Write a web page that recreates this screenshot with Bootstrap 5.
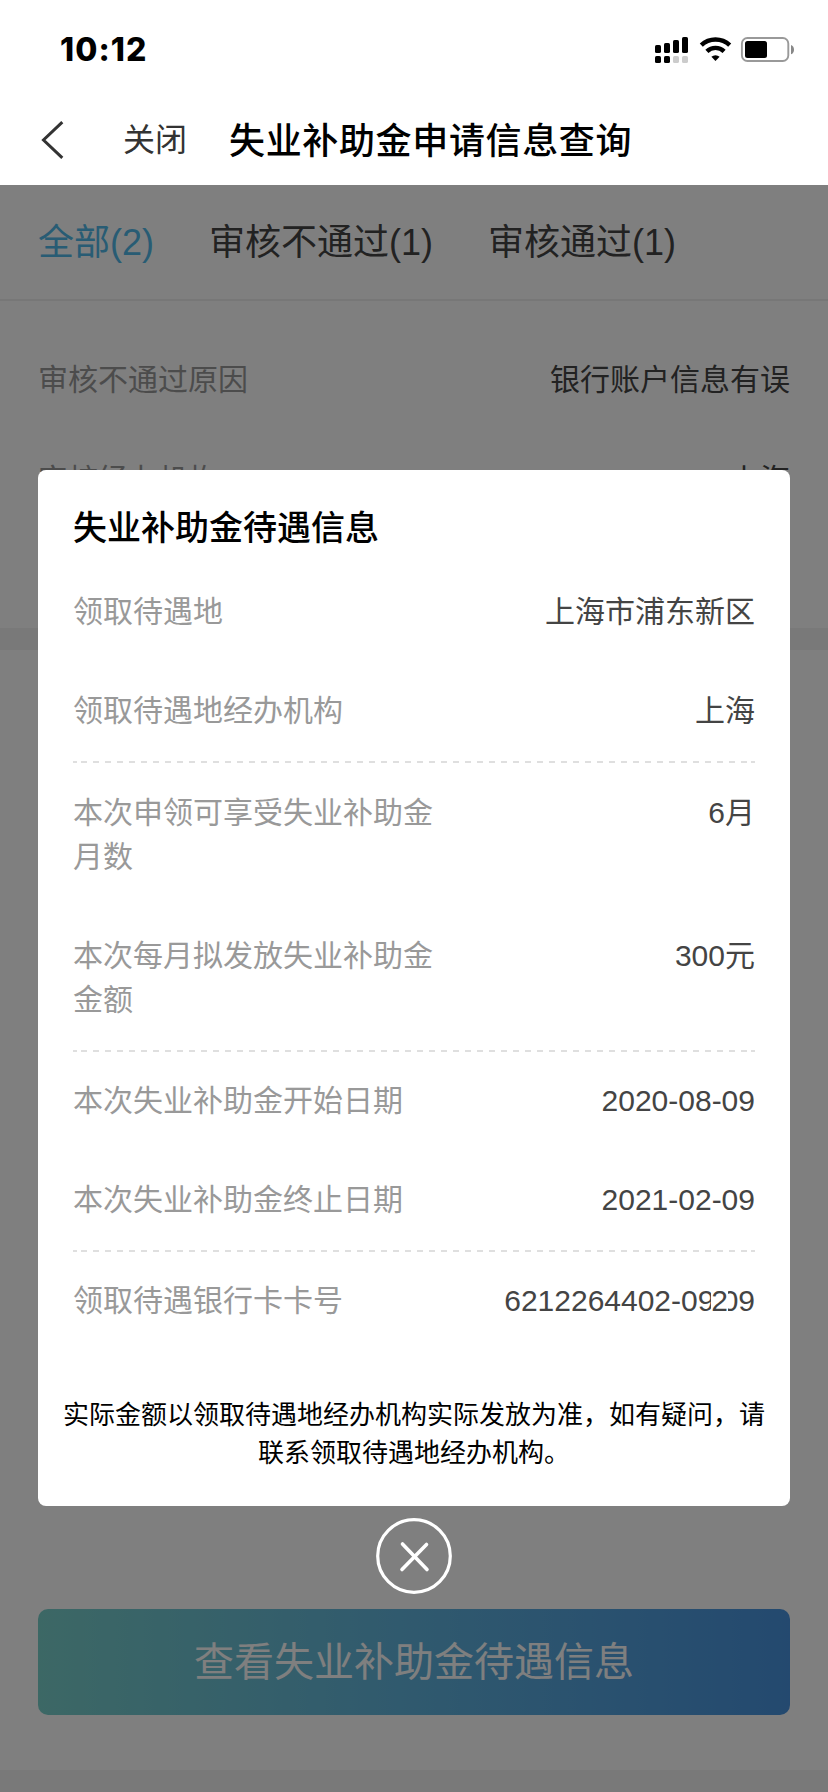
<!DOCTYPE html>
<html lang="zh-CN">
<head>
<meta charset="utf-8">
<meta name="viewport" content="width=device-width, initial-scale=1">
<title>失业补助金申请信息查询</title>
<link href="https://cdn.jsdelivr.net/npm/bootstrap@5.3.0/dist/css/bootstrap.min.css" rel="stylesheet">
<style>
body{font-family:"Liberation Sans","Noto Sans CJK SC",sans-serif;color:#444;background:#fff;overflow:hidden}
.screen{height:1792px}
.topbar{height:185px}
.statusbar{height:98px;padding:2px 34px 0 60px}
.clock{font:800 32px/1 Inter,sans-serif;color:#000;letter-spacing:1.100px}
.navline{height:87px;padding-left:41px}
.back{margin-top:-4px}
.close-link{font-size:32px;line-height:44px;margin:-3px 0 0 59px;color:#333}
.page-title{font-size:36px;font-weight:500;line-height:50px;margin-left:42px;letter-spacing:.65px;color:#000}
.tabs{height:116px;padding:0 38px;gap:55px;font-size:36px;line-height:50px;border-bottom:2px solid #eee}
.tabs .current{color:#50b8e8}
.tabs span{margin-top:2px}
.kv{font-size:30px;line-height:44px;gap:24px}
.kv dt{font-weight:400;color:#999;width:362px}
.kv dd{color:#444;margin:0;text-align:right;white-space:nowrap}
.kv+.kv{margin-top:55px}
.record{height:327px;padding:57px 38px 0}
.record .kv+.kv{margin-top:56px}
.spacer{height:22px;background:#f2f2f2}
.action{margin:959px 38px 0;height:106px;border-radius:10px;font-size:40px;color:#fff;background:linear-gradient(90deg,#79d0cb,#60b3dd 50%,#4893df);border:0}
.dim{top:185px;left:0;right:0;bottom:0;background:rgba(0,0,0,.5);padding:285px 38px 0}
.sheet{height:1036px;border-radius:8px}
.sheet-title{font-size:34px;font-weight:500;line-height:48px;color:#000;padding:34px 0 38px;margin:0}
.group{margin:0 35px}
.dash{height:2px;margin:28px 35px 27px;--ink:#dfdfdf;background:linear-gradient(var(--ink) 0 0) 0 0/4px 2px no-repeat,linear-gradient(var(--ink) 0 0) 100% 0/4px 2px no-repeat,repeating-linear-gradient(90deg,var(--ink) 0 6px,transparent 6px 12px) 8px 0/666px 2px no-repeat}
.dash-first{margin-bottom:28px}
.note{font-size:26px;line-height:38.4px;color:#000;white-space:nowrap;margin-top:72.5px}
.piece{overflow:hidden;display:flex}
.piece-nine{width:13.4px}
.piece-zero{width:10.5px;justify-content:flex-end}
.dismiss{width:76px;height:76px;margin-top:12px}
svg{display:block}
</style>
</head>
<body>
<div class="screen d-flex flex-column position-relative">
  <header class="topbar bg-white">
    <div class="statusbar d-flex align-items-center justify-content-between">
      <span class="clock">10:12</span>
      <svg width="140" height="28" viewBox="0 0 140 28">
        <g fill="#000">
          <rect x="1" y="9" width="6" height="8" rx="1.6"/><rect x="10" y="7" width="6" height="10" rx="1.6"/><rect x="19" y="4" width="6" height="13" rx="1.6"/><rect x="28" y="1" width="6" height="16" rx="1.6"/>
          <rect x="1" y="20" width="6" height="7" rx="1.6"/><rect x="10" y="20" width="6" height="7" rx="1.6"/>
        </g>
        <g fill="#ccc"><rect x="19" y="20" width="6" height="7" rx="1.6"/><rect x="28" y="20" width="6" height="7" rx="1.6"/></g>
        <g fill="none" stroke="#000" stroke-width="4.4"><path d="M47.3 9.2a20.5 20.5 0 0 1 28.4 0"/><path d="M52.9 15.3a12.4 12.4 0 0 1 17.2 0"/></g>
        <path d="M61.5 25l-4.1-4.2a6.2 6.2 0 0 1 8.2 0z"/>
        <rect x="87.9" y="2" width="46.4" height="23" rx="5.5" fill="none" stroke="#999" stroke-width="1.9"/>
        <rect x="91" y="5" width="22" height="17" rx="2.5"/>
        <path d="M137 9c4 1.4 4 8 0 9.3z" fill="#888"/>
      </svg>
    </div>
    <nav class="navline d-flex align-items-center">
      <svg class="back" width="23" height="38" viewBox="0 0 23 38"><path d="M21.3 1.2L2.5 19l18.8 17.8" fill="none" stroke="#333" stroke-width="3"/></svg>
      <span class="close-link">关闭</span>
      <h1 class="page-title mb-0">失业补助金申请信息查询</h1>
    </nav>
  </header>

  <main class="flex-grow-1 d-flex flex-column">
    <div class="tabs d-flex align-items-center">
      <span class="current">全部(2)</span><span>审核不通过(1)</span><span>审核通过(1)</span>
    </div>
    <dl class="record mb-0">
      <div class="kv d-flex justify-content-between"><dt>审核不通过原因</dt><dd>银行账户信息有误</dd></div>
      <div class="kv d-flex justify-content-between"><dt>审核经办机构</dt><dd>上海</dd></div>
    </dl>
    <div class="spacer"></div>
    <button class="action btn d-flex align-items-center justify-content-center">查看失业补助金待遇信息</button>
    <div class="spacer mt-auto"></div>
  </main>

  <div class="dim position-absolute">
    <section class="sheet bg-white">
      <h2 class="sheet-title group">失业补助金待遇信息</h2>
      <dl class="group mb-0">
        <div class="kv d-flex justify-content-between"><dt>领取待遇地</dt><dd>上海市浦东新区</dd></div>
        <div class="kv d-flex justify-content-between"><dt>领取待遇地经办机构</dt><dd>上海</dd></div>
      </dl>
      <div class="dash dash-first"></div>
      <dl class="group mb-0">
        <div class="kv d-flex justify-content-between"><dt>本次申领可享受失业补助金月数</dt><dd>6月</dd></div>
        <div class="kv d-flex justify-content-between"><dt>本次每月拟发放失业补助金金额</dt><dd>300元</dd></div>
      </dl>
      <div class="dash"></div>
      <dl class="group mb-0">
        <div class="kv d-flex justify-content-between"><dt>本次失业补助金开始日期</dt><dd>2020-08-09</dd></div>
        <div class="kv d-flex justify-content-between"><dt>本次失业补助金终止日期</dt><dd>2021-02-09</dd></div>
      </dl>
      <div class="dash"></div>
      <dl class="group mb-0">
        <div class="kv d-flex justify-content-between"><dt>领取待遇银行卡卡号</dt><dd class="d-flex"><span>6212264402-0</span><span class="piece piece-nine"><span>9</span></span><span>2</span><span class="piece piece-zero"><span>0</span></span><span>9</span></dd></div>
      </dl>
      <p class="note text-center mb-0">实际金额以领取待遇地经办机构实际发放为准，如有疑问，请<br>联系领取待遇地经办机构。</p>
    </section>
    <svg class="dismiss mx-auto" viewBox="0 0 76 76"><g fill="none" stroke="#fff"><circle cx="38" cy="38" r="36.3" stroke-width="3.2"/><path d="M26.5 26l24.5 25.5M50.5 26.5L26 51.5" stroke-width="3.6" stroke-linecap="round"/></g></svg>
  </div>
</div>
<script src="https://cdn.jsdelivr.net/npm/bootstrap@5.3.0/dist/js/bootstrap.bundle.min.js"></script>
</body>
</html>
